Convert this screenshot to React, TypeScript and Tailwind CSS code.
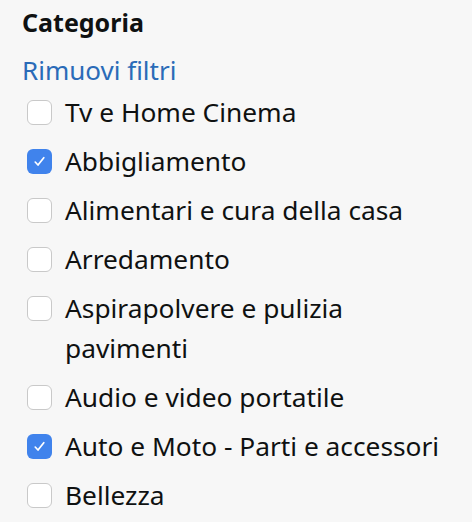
const items = [
  { label: "Tv e Home Cinema", checked: false },
  { label: "Abbigliamento", checked: true },
  { label: "Alimentari e cura della casa", checked: false },
  { label: "Arredamento", checked: false },
  { label: "Aspirapolvere e pulizia pavimenti", checked: false },
  { label: "Audio e video portatile", checked: false },
  { label: "Auto e Moto - Parti e accessori", checked: true },
  { label: "Bellezza", checked: false },
];

function Box({ checked }: { checked: boolean }) {
  if (checked) {
    return (
      <span className="mt-[8px] w-[25px] h-[25px] rounded-[6px] bg-[#4083ec] shrink-0 flex items-center justify-center">
        <svg width="15" height="15" viewBox="0 0 14 14" fill="none" stroke="#fff" strokeWidth="1.6" strokeLinecap="round" strokeLinejoin="round">
          <path d="M3 7.5l2.6 2.8L11 3.5" />
        </svg>
      </span>
    );
  }
  return (
    <span className="mt-[8px] w-[25px] h-[25px] rounded-[6px] bg-white border border-[#c9c9c9] shrink-0" />
  );
}

export default function App() {
  return (
    <div className="min-h-screen bg-[#f7f7f7] pl-[22px] pr-[16px] pt-[4px] font-['Noto_Sans',sans-serif] text-[#0f1111]">
      <h2 className="text-[25px] font-bold leading-[36px]">Categoria</h2>
      <a className="block mt-[12px] text-[26px] leading-[36px] text-[#2a6bb8]">Rimuovi filtri</a>
      <ul className="mt-[4px] flex flex-col gap-[9px] pl-[5px]">
        {items.map((it) => (
          <li key={it.label} className="flex gap-[13px] items-start">
            <Box checked={it.checked} />
            <span className="flex-1 text-[26.3px] leading-[40px]">{it.label}</span>
          </li>
        ))}
      </ul>
    </div>
  );
}
